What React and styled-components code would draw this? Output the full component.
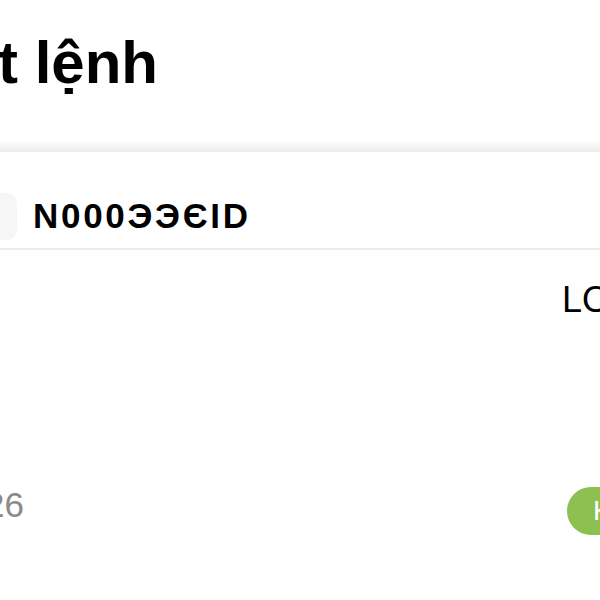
import React from "react";
import styled, { createGlobalStyle } from "styled-components";

const Global = createGlobalStyle`
  html, body { margin: 0; padding: 0; background: #ffffff; }
  body { font-family: "Liberation Sans", Arial, sans-serif; overflow: hidden; }
  #root { width: 600px; height: 600px; overflow: hidden; }
`;

const Screen = styled.div`
  width: 600px;
  height: 600px;
  overflow: hidden;
  display: flex;
  flex-direction: column;
  background: #ffffff;
`;

const Header = styled.header`
  height: 140px;
  display: flex;
  align-items: flex-start;
  padding-top: 30px;
  box-sizing: border-box;
`;

const TitleClip = styled.div`
  width: 158px;
  display: flex;
  justify-content: flex-end;
  white-space: nowrap;
`;

const Title = styled.h1`
  margin: 0;
  font-size: 60px;
  line-height: 66px;
  font-weight: 700;
  color: #000000;
`;

const Band = styled.div`
  height: 12px;
  background: linear-gradient(#ffffff, #ececec);
`;

const Card = styled.section`
  height: 98px;
  display: flex;
  align-items: center;
  gap: 16px;
  border-bottom: 2px solid #ececec;
  box-sizing: border-box;
  padding-top: 32px;
`;

const IconBox = styled.div`
  width: 17px;
  height: 47px;
  background: #f5f6f5;
  border-radius: 0 10px 10px 0;
`;

const Code = styled.div`
  font-size: 35px;
  font-weight: 700;
  color: #000000;
  letter-spacing: 2.7px;
  white-space: nowrap;
`;

const Body = styled.div`
  display: flex;
  flex-direction: column;
`;

const InfoRow = styled.div`
  height: 100px;
  display: flex;
  align-items: center;
  justify-content: flex-end;
  white-space: nowrap;
`;

const StatusRow = styled.div`
  display: flex;
  align-items: flex-start;
  justify-content: space-between;
  padding-top: 137px;
  white-space: nowrap;
`;

const Value = styled.div`
  font-size: ${(p) => (p.$muted ? "35px" : "36px")};
  color: ${(p) => (p.$muted ? "#8a8a8a" : "#000000")};
  margin-right: ${(p) => (p.$bleed ? "-10px" : "0")};
  margin-top: ${(p) => (p.$muted ? "-2px" : "0")};
`;

const DateClip = styled.div`
  width: 24px;
  display: flex;
  justify-content: flex-end;
`;

const PillClip = styled.div`
  width: 33px;
  display: flex;
  justify-content: flex-start;
`;

const Pill = styled.button`
  flex-shrink: 0;
  height: 48px;
  padding: 0 22px 0 26px;
  border: none;
  border-radius: 24px;
  background: #8cc152;
  color: #ffffff;
  font-family: inherit;
  font-size: 28px;
  white-space: nowrap;
`;

export default function App() {
  return (
    <>
      <Global />
      <Screen>
        <Header>
          <TitleClip>
            <Title>Chi tiết lệnh</Title>
          </TitleClip>
        </Header>
        <Band />
        <Card>
          <IconBox />
          <Code>N000ЭЭЄID</Code>
        </Card>
        <Body>
          <InfoRow>
            <Value $bleed>LO</Value>
          </InfoRow>
          <StatusRow>
            <DateClip>
              <Value $muted>2026</Value>
            </DateClip>
            <PillClip>
              <Pill>Khớp</Pill>
            </PillClip>
          </StatusRow>
        </Body>
      </Screen>
    </>
  );
}
